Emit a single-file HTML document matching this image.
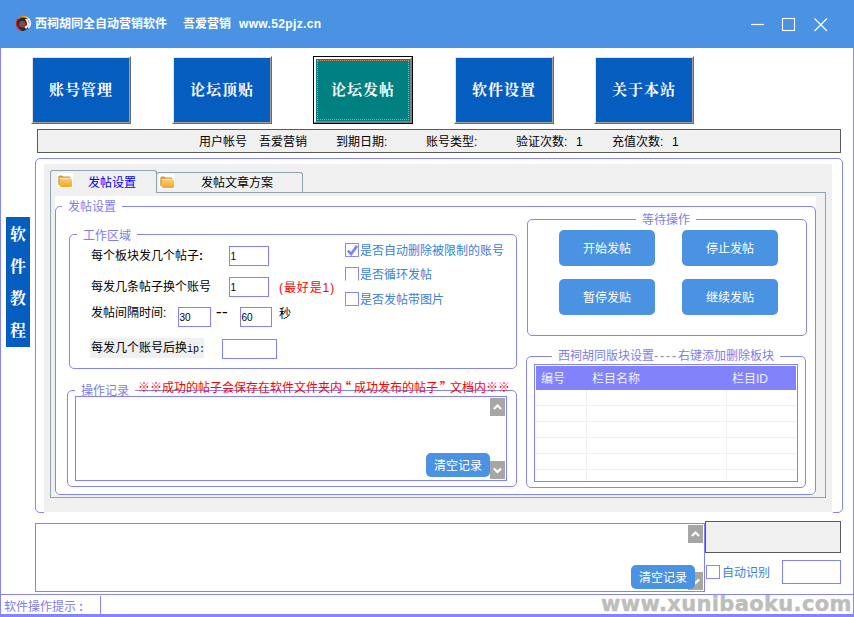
<!DOCTYPE html>
<html lang="zh-CN">
<head>
<meta charset="utf-8">
<title>西祠胡同全自动营销软件</title>
<style>
*{box-sizing:border-box;margin:0;padding:0}
html,body{width:854px;height:617px;overflow:hidden;background:#fff}
body{position:relative;font-family:"Liberation Sans","Noto Sans CJK SC",sans-serif;font-size:12px;color:#000;line-height:1}
.abs,.abs-all *{position:absolute}
#win{position:absolute;left:0;top:0;width:854px;height:617px;background:#fff}
#win *{position:absolute}
.topbtn span{position:relative !important}
#sidebar br{position:static !important}
#titlebar{left:0;top:0;width:854px;height:48px;background:#4a93e2}
#titlebar>*{position:absolute}
.ttl{top:16px;color:#fff;font-weight:bold;font-size:12px;line-height:16px;white-space:pre;letter-spacing:0}
.bl{background:#8484fb}
.topbtn{width:100px;height:68px;border:1px solid;border-color:#fff #696969 #696969 #fff;box-shadow:0 0 0 0 #000;background:#055dc0;outline:1px solid transparent;color:#fff;font-family:"Liberation Serif","Noto Serif CJK SC",serif;font-weight:bold;font-size:15px;letter-spacing:1px;text-align:center;line-height:66px}
.topbtn i{position:absolute;left:0;top:0;right:0;bottom:0;border:1px solid;border-color:#e3e3e3 #a0a0a0 #a0a0a0 #e3e3e3}
.topbtn span{position:relative}
#act{border-color:#000;background:#008080}
#act i{border-width:2px;border-color:#fff #808080 #808080 #fff}
#act b{position:absolute;left:3px;top:3px;right:3px;bottom:3px;border:1px dotted #c89a70}
#statusbar{left:37px;top:129px;width:804px;height:24px;background:#f0f0f0;border:1px solid #5a5a5a}
#statusbar span{position:absolute;top:5px;line-height:14px;white-space:pre}
.grp{border:1px solid #8686f0;border-radius:5px}
.lbl{position:absolute;background:#fff;color:#7d7de8;line-height:14px;padding:0 6px;white-space:nowrap}
.inp{background:#fff;border:1px solid #8282ff;font-size:10px;line-height:19px;padding-left:0.5px;font-family:"Liberation Sans",sans-serif}
.t{white-space:nowrap;line-height:14px}
.chk{width:14px;height:14px;border:1px solid #8a8af0;background:#fff}
.blue{color:#3a80d8}
.red{color:#f00}
.btn{background:#4a93e2;color:#fff;border-radius:5px;text-align:center;white-space:nowrap}
.q{position:static !important;display:inline-block;width:12px;font-family:"Noto Sans CJK SC",sans-serif;font-weight:bold}
.sb{width:15px;height:18px;background:#a6a6a6}
</style>
</head>
<body>
<div id="win">
  <div id="titlebar">
    <svg style="left:15px;top:15px" width="17" height="17" viewBox="0 0 16 16" fill="none">
      <circle cx="8" cy="8.1" r="6.3" fill="#2b2426"/>
      <circle cx="7" cy="8.6" r="3.2" fill="#5c5c60"/>
      <path d="M5.8 14.1A6.5 6.5 0 0 1 3.4 3.4" stroke="#e40d0d" stroke-width="1.3"/>
      <path d="M3.4 3.4A6.5 6.5 0 0 1 6.9 1.6" stroke="#ff6a00" stroke-width="1.5"/>
      <path d="M6.9 1.6A6.5 6.5 0 0 1 10.8 2.1" stroke="#ffa600" stroke-width="1.7"/>
      <path d="M10.8 2.1A6.5 6.5 0 0 1 12.6 3.4" stroke="#ffd83a" stroke-width="1.7"/>
      <path d="M12.6 3.4A6.5 6.5 0 0 1 12.6 12.2" stroke="#fff" stroke-width="1.6"/>
      <path d="M11.4 4.6L12.4 9.6L9.6 12.4" stroke="#f3eeee" stroke-width="2.2"/><path d="M9.6 4.2L12 4.4" stroke="#fff" stroke-width="1"/>
      <path d="M8.2 6.2L9.8 8.6L8 11.6" stroke="#d61a1a" stroke-width="1.3"/>
      <path d="M5.2 10.5L6.6 11.2" stroke="#b01818" stroke-width="1"/>
      <path d="M10.6 6.5L11.2 10" stroke="#3a2a2a" stroke-width=".8"/>
      <path d="M5.2 14.2Q7 15 9 14.3" stroke="#241c1c" stroke-width=".9"/>
    </svg>
    <div class="ttl" style="left:35px">西祠胡同全自动营销软件</div><div class="ttl" style="left:183px">吾爱营销</div><div class="ttl" style="left:239px;letter-spacing:0.35px">www.52pjz.cn</div>
    <svg style="left:745px;top:12px" width="90" height="26" viewBox="0 0 90 26" fill="none" stroke="#fff" stroke-width="1.2">
      <path d="M6 12.5H19"/>
      <rect x="37.5" y="6.5" width="12" height="12" stroke-width="1.1"/>
      <path d="M69.5 6.5L82 19M82 6.5L69.5 19"/>
    </svg>
  </div>
  <!-- window borders -->
  <div class="bl" style="left:0;top:48px;width:1px;height:569px"></div>
  <div class="bl" style="left:853px;top:48px;width:1px;height:569px"></div>
  <div class="bl" style="left:0;top:614px;width:854px;height:3px"></div>

  <!-- top buttons -->
  <div class="topbtn" style="left:31px;top:56px"><i></i><span>账号管理</span></div>
  <div class="topbtn" style="left:172px;top:56px"><i></i><span>论坛顶贴</span></div>
  <div class="topbtn" id="act" style="left:313px;top:56px"><i></i><b></b><span>论坛发帖</span></div>
  <div class="topbtn" style="left:454px;top:56px"><i></i><span>软件设置</span></div>
  <div class="topbtn" style="left:594px;top:56px"><i></i><span>关于本站</span></div>

  <div id="statusbar">
    <span style="left:161px">用户帐号</span>
    <span style="left:221px">吾爱营销</span>
    <span style="left:298px">到期日期:</span>
    <span style="left:388px">账号类型:</span>
    <span style="left:478px">验证次数:</span><span style="left:538px">1</span>
    <span style="left:574px">充值次数:</span><span style="left:634px">1</span>
  </div>

  <!-- left vertical bar -->
  <div id="sidebar" style="left:6px;top:217px;width:24px;height:130px;background:#055dc0;color:#fff;font-family:'Liberation Serif','Noto Serif CJK SC',serif;font-weight:bold;font-size:16px;text-align:center;line-height:32px;padding-top:2px">软<br>件<br>教<br>程</div>

  <!-- outer group -->
  <div class="grp" style="left:35px;top:158px;width:808px;height:355px;border-radius:5px"></div>
  <!-- tab control gray bg -->
  <div style="left:44px;top:164px;width:788px;height:348px;background:#f0f0f0"></div>
  <div style="left:44px;top:512px;width:789px;height:1px;background:#fff"></div>
  <!-- tab page border -->
  <div style="left:50px;top:192px;width:776px;height:306px;border:1px solid #8fa3b0;background:#f0f0f0"></div>
  <!-- tab page white -->
  <div style="left:55px;top:196px;width:761px;height:299px;background:#fff"></div>
  <!-- tabs -->
  <div id="tab2" style="left:156px;top:172px;width:147px;height:20px;border:1px solid #8fa3b0;border-bottom:none;border-radius:3px 3px 0 0;background:#f0f0f0"></div>
  <div id="tab1" style="left:50px;top:170px;width:107px;height:23px;border:1px solid #8fa3b0;border-bottom:none;border-radius:3px 3px 0 0;background:#f0f0f0"></div>
  <svg class="fold" style="left:57px;top:173px" width="16" height="16" viewBox="0 0 16 16"><defs><linearGradient id="fg" x1="0" y1="0" x2="0" y2="1"><stop offset="0" stop-color="#f9cc70"/><stop offset="1" stop-color="#f2a52c"/></linearGradient></defs><rect width="16" height="15" fill="#fff"/><path d="M1.3 4.2Q1.3 2.6 2.9 2.6H4.8Q5.6 2.6 6.2 3.6H12Q13.2 3.6 13.2 4.8V9H2.8V12H1.3Z" fill="#d9962f"/><rect x="2.6" y="4.7" width="10" height="1.6" fill="#fbeed2"/><rect x="2.8" y="5.75" width="12.3" height="8.35" rx="1.7" fill="url(#fg)"/></svg>
  <svg class="fold" style="left:159px;top:174px" width="16" height="16" viewBox="0 0 16 16"><rect width="16" height="15" fill="#fff"/><path d="M1.3 4.2Q1.3 2.6 2.9 2.6H4.8Q5.6 2.6 6.2 3.6H12Q13.2 3.6 13.2 4.8V9H2.8V12H1.3Z" fill="#d9962f"/><rect x="2.6" y="4.7" width="10" height="1.6" fill="#fbeed2"/><rect x="2.8" y="5.75" width="12.3" height="8.35" rx="1.7" fill="url(#fg)"/></svg>
  <div class="t" style="left:88px;top:176px;color:#0000f0">发帖设置</div>
  <div class="t" style="left:201px;top:176px">发帖文章方案</div>

  <!-- group: 发帖设置 -->
  <div class="grp" style="left:55px;top:206px;width:761px;height:289px"></div>
  <div class="lbl" style="left:62px;top:200px">发帖设置</div>
  <!-- group: 工作区域 -->
  <div class="grp" style="left:69px;top:234px;width:448px;height:135px"></div>
  <div class="lbl" style="left:77px;top:229px">工作区域</div>
  <div class="t" style="left:91px;top:249px">每个板块发几个帖子<b style="position:static">:</b></div>
  <div class="inp" style="left:229px;top:246px;width:40px;height:20px">1</div>
  <div class="t" style="left:91px;top:280px">每发几条帖子换个账号</div>
  <div class="inp" style="left:229px;top:277px;width:40px;height:20px">1</div>
  <div class="t red" style="left:279px;top:281px;letter-spacing:0.9px">(最好是1)</div>
  <div class="t" style="left:91px;top:306px">发帖间隔时间:</div>
  <div class="inp" style="left:178px;top:307px;width:33px;height:20px">30</div>
  <div class="t" style="left:214px;top:306px;letter-spacing:-3.6px;font-family:'Liberation Mono',monospace;font-size:16px">--</div>
  <div class="inp" style="left:240px;top:307px;width:32px;height:20px">60</div>
  <div class="t" style="left:279px;top:307px">秒</div>
  <div style="left:90px;top:338px;width:114px;height:20px;background:#f0f0f0"></div>
  <div class="t" style="left:91px;top:341px">每发几个账号后换<span style="position:static;font-family:'Liberation Mono',monospace;font-size:10px">ip:</span></div>
  <div class="inp" style="left:222px;top:339px;width:55px;height:20px"></div>

  <div class="chk" style="left:345px;top:243px"><svg style="left:0;top:0" width="12" height="12" viewBox="0 0 12 12"><path d="M1.8 6.6L5.2 10L11 1.8" stroke="#8080fa" stroke-width="2.7" fill="none"/></svg></div>
  <div class="t blue" style="left:360px;top:244px">是否自动删除被限制的账号</div>
  <div class="chk" style="left:345px;top:267px;border-bottom-color:#fff"></div>
  <div class="t blue" style="left:360px;top:268px">是否循环发帖</div>
  <div class="chk" style="left:345px;top:292px"></div>
  <div class="t blue" style="left:360px;top:293px">是否发帖带图片</div>

  <!-- group: 等待操作 -->
  <div class="grp" style="left:527px;top:219px;width:280px;height:117px"></div>
  <div class="lbl" style="left:636px;top:213px">等待操作</div>
  <div class="btn" style="left:559px;top:230px;width:96px;height:36px;line-height:38px">开始发帖</div>
  <div class="btn" style="left:682px;top:230px;width:96px;height:36px;line-height:38px">停止发帖</div>
  <div class="btn" style="left:559px;top:279px;width:96px;height:36px;line-height:38px">暂停发贴</div>
  <div class="btn" style="left:682px;top:279px;width:96px;height:36px;line-height:38px">继续发贴</div>

  <!-- group: 操作记录 -->
  <div class="grp" style="left:67px;top:390px;width:450px;height:97px"></div>
  <div class="lbl" style="left:75px;top:384px">操作记录</div>
  <div class="t red" style="left:138px;top:380px;background:transparent">※※成功的帖子会保存在软件文件夹内<span class="q" style="margin-left:-3px;margin-right:3px">“</span>成功发布的帖子<span class="q" style="margin-left:2px;margin-right:-2px">”</span>文档内※※</div>
  <div style="left:75px;top:396px;width:432px;height:85px;border:1px solid #8282ff;background:#fff"></div>
  <div class="sb" style="left:490px;top:398px"><svg style="left:0;top:0" width="15" height="18"><path d="M3.9 11L7.5 7.4L11.1 11" stroke="#fff" stroke-width="2.1" fill="none"/></svg></div>
  <div class="sb" style="left:490px;top:461px"><svg style="left:0;top:0" width="15" height="18"><path d="M3.9 7.4L7.5 11L11.1 7.4" stroke="#fff" stroke-width="2.1" fill="none"/></svg></div>
  <div class="btn" style="left:426px;top:453px;width:64px;height:24px;line-height:26px">清空记录</div>

  <!-- group: 版块设置 -->
  <div class="grp" style="left:526px;top:356px;width:280px;height:132px"></div>
  <div class="lbl" style="left:552px;top:349px">西祠胡同版块设置<span style="position:static;letter-spacing:2px">----</span>右键添加删除板块</div>
  <div id="lv" style="left:534px;top:364px;width:264px;height:118px;border:1px solid #8282ff;background:#fff">
    <div style="left:1px;top:1px;width:260px;height:24px;background:#8282fb"></div>
    <div class="t" style="left:6px;top:7px;color:#f0f0ff">编号</div>
    <div class="t" style="left:57px;top:7px;color:#f0f0ff">栏目名称</div>
    <div class="t" style="left:197px;top:7px;color:#f0f0ff">栏目ID</div>
    <div style="left:0;top:40px;width:262px;height:1px;background:#f0f0f0"></div>
    <div style="left:0;top:56px;width:262px;height:1px;background:#f0f0f0"></div>
    <div style="left:0;top:72px;width:262px;height:1px;background:#f0f0f0"></div>
    <div style="left:0;top:88px;width:262px;height:1px;background:#f0f0f0"></div>
    <div style="left:0;top:104px;width:262px;height:1px;background:#f0f0f0"></div>
    <div style="left:51px;top:25px;width:1px;height:91px;background:#f0f0f0"></div>
    <div style="left:191px;top:25px;width:1px;height:91px;background:#f0f0f0"></div>
  </div>

  <!-- bottom log -->
  <div style="left:35px;top:523px;width:670px;height:69px;border:1px solid #8282ff;background:#fff"></div>
  <div class="sb" style="left:688px;top:525px"><svg style="left:0;top:0" width="15" height="18"><path d="M3.9 11L7.5 7.4L11.1 11" stroke="#fff" stroke-width="2.1" fill="none"/></svg></div>
  <div class="sb" style="left:688px;top:572px"><svg style="left:0;top:0" width="15" height="18"><path d="M3.9 7.4L7.5 11L11.1 7.4" stroke="#fff" stroke-width="2.1" fill="none"/></svg></div>
  <div class="btn" style="left:631px;top:565px;width:64px;height:24px;line-height:26px">清空记录</div>
  <div style="left:705px;top:521px;width:136px;height:32px;border:1px solid #5a5a5a;background:#f0f0f0"></div>
  <div class="chk" style="left:706px;top:565px"></div>
  <div class="t blue" style="left:722px;top:566px">自动识别</div>
  <div class="inp" style="left:782px;top:560px;width:59px;height:24px"></div>

  <!-- bottom status -->
  <div class="bl" style="left:1px;top:594px;width:852px;height:1px"></div>
  <div class="t" style="left:4px;top:600px;color:#7d7de8">软件操作提示<b style="position:static;margin-left:3px">:</b></div>
  <div class="bl" style="left:100px;top:596px;width:1px;height:18px"></div>
  <div id="wm" style="left:601px;top:595px;width:252px;height:19px;color:#bdbdbd;font-family:'DejaVu Sans','Liberation Sans',sans-serif;font-weight:bold;font-size:21px;line-height:19px;letter-spacing:0.35px;white-space:nowrap;overflow:hidden;-webkit-text-stroke:0.4px #bdbdbd">www.xunibaoku.com</div>
</div>
</body>
</html>
